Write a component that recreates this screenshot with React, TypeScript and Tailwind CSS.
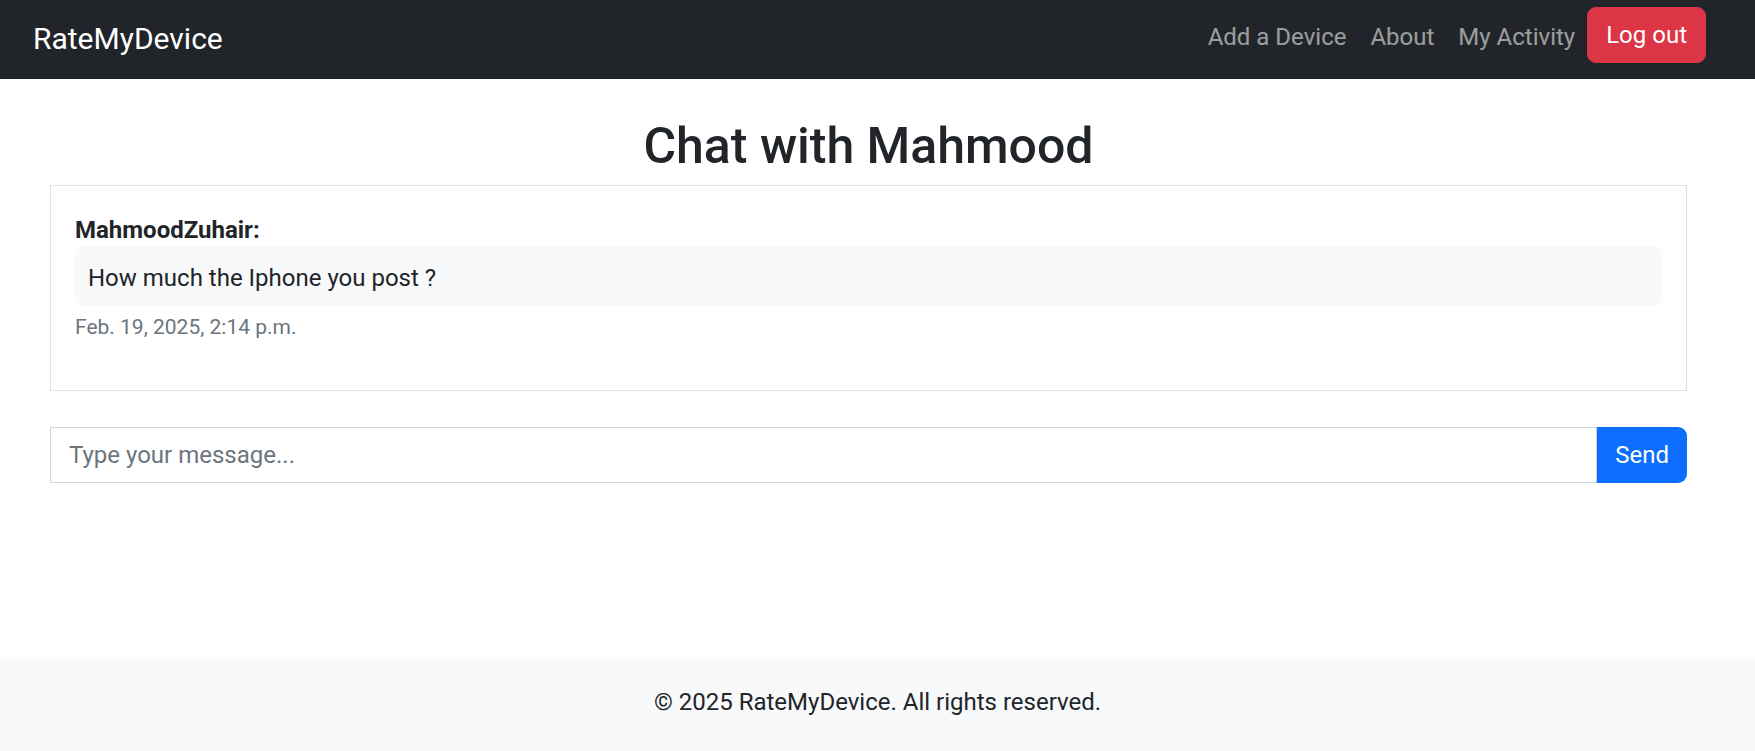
import React from "react";

export default function App() {
  const font = { fontFamily: '"Segoe UI", Roboto, "Noto Sans", "Liberation Sans", sans-serif' };
  return (
    <div className="min-h-screen flex flex-col bg-white text-[#212529]" style={font}>
      <nav className="h-[79px] bg-[#212529] flex items-center pl-[33px] pr-[49px]">
        <span className="text-[30px] leading-[45px] text-white -mt-[2px]">RateMyDevice</span>
        <div className="ml-auto self-start mt-[7px] flex items-center">
          <span className="px-[12px] pt-[4px] text-[24px] leading-[36px] text-white/55">Add a Device</span>
          <span className="px-[12px] pt-[4px] text-[24px] leading-[36px] text-white/55">About</span>
          <span className="px-[12px] pt-[4px] text-[24px] leading-[36px] text-white/55">My Activity</span>
          <button className="h-[56px] px-[18px] rounded-[9px] bg-[#dc3545] border border-[#dc3545] text-white text-[24px] leading-[36px]">
            Log out
          </button>
        </div>
      </nav>

      <main className="flex-1 pl-[50px] pr-[68px]">
        <h1 className="mt-[38px] mb-[10px] text-center text-[50px] leading-[58px] font-medium">Chat with Mahmood</h1>

        <div className="border border-[#dee2e6] px-[24px] pt-[24px] pb-[24px]">
          <div className="text-[24px] leading-[36px] font-bold pt-[2px] h-[36px]">MahmoodZuhair:</div>
          <div className="bg-[#f8f9fa] rounded-[9px] px-[13px] pt-[14px] pb-[10px] text-[24px] leading-[36px]">
            How much the Iphone you post ?
          </div>
          <div className="mt-[6px] mb-[22px] text-[21px] leading-[31.5px] text-[#6c757d]">Feb. 19, 2025, 2:14 p.m.</div>
        </div>

        <div className="mt-[36px] flex h-[56px]">
          <input
            className="flex-1 min-w-0 border border-[#ced4da] px-[18px] text-[24px] leading-[36px] text-[#212529] placeholder:text-[#6c757d] outline-none bg-white"
            placeholder="Type your message..."
            style={font}
          />
          <button className="px-[18px] bg-[#0d6efd] text-white text-[24px] leading-[36px] rounded-r-[9px]">Send</button>
        </div>
      </main>

      <footer className="h-[94px] bg-[#f8f9fa] flex items-center justify-center pb-[4px] text-[24px] leading-[36px] text-[#212529]">
        © 2025 RateMyDevice. All rights reserved.
      </footer>
    </div>
  );
}
